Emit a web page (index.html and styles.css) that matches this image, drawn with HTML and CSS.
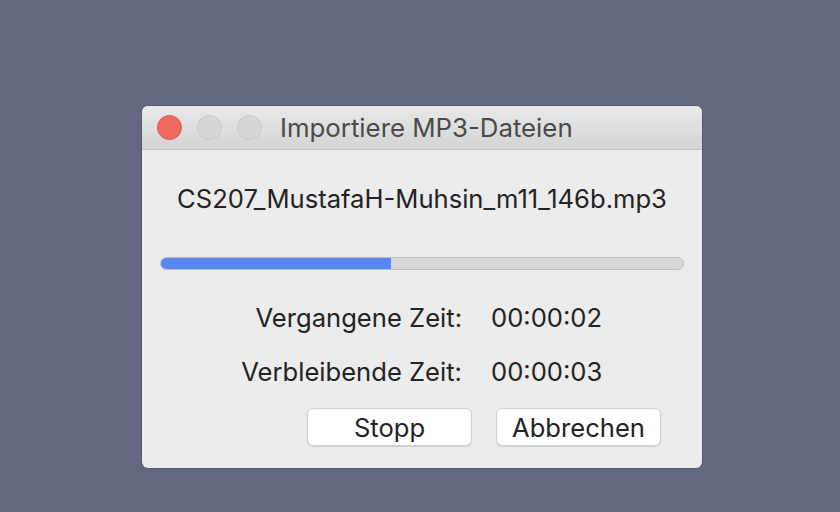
FILE: index.html
```html
<!DOCTYPE html>
<html>
<head>
<meta charset="utf-8">
<link rel="stylesheet" href="styles.css">
</head>
<body>
<div class="window">
  <div class="titlebar">
    <div class="lights">
      <span class="light close"></span>
      <span class="light"></span>
      <span class="light"></span>
    </div>
    <div class="title">Importiere MP3-Dateien</div>
  </div>
  <div class="content">
    <div class="filename">CS207_MustafaH-Muhsin_m11_146b.mp3</div>
    <div class="progress"><div class="fill" style="width:44%"></div></div>
    <div class="times">
      <div class="label">Vergangene Zeit:</div><div class="value">00:00:02</div>
      <div class="label">Verbleibende Zeit:</div><div class="value">00:00:03</div>
    </div>
    <div class="buttons">
      <button class="btn">Stopp</button>
      <button class="btn">Abbrechen</button>
    </div>
  </div>
</div>
</body>
</html>
```
FILE: styles.css
```css
html, body { margin: 0; padding: 0; }
body {
  background: #63677f;
  width: 840px;
  height: 512px;
  overflow: hidden;
  font-family: Inter, "Open Sans", sans-serif;
  color: #232323;
}
.window {
  margin: 106px 0 0 142px;
  width: 560px;
  height: 362px;
  border-radius: 6px;
  background: #ececec;
  overflow: hidden;
  box-shadow: 0 0 0 0.5px rgba(0,0,0,0.25);
  display: flex;
  flex-direction: column;
}
.titlebar {
  height: 43px;
  border-bottom: 1px solid #c5c5c5;
  background: linear-gradient(#e9e9e9, #d4d4d4);
  display: flex;
  align-items: center;
  padding-left: 15px;
}
.lights { display: flex; gap: 15px; }
.light {
  width: 23px; height: 23px;
  border-radius: 50%;
  border: 1px solid #c8c8c8;
  background: #d6d6d6;
}
.light.close { background: #ec6a5e; border-color: #d35c51; }
.title {
  margin-left: 18px;
  font-size: 25.8px;
  color: #4a4a4a;
  padding-bottom: 1px;
}
.content {
  flex: 1;
  display: flex;
  flex-direction: column;
  padding: 0 18px 0 18px;
}
.filename {
  text-align: center;
  font-size: 25.6px;
  margin-top: 34px;
  line-height: 30px;
}
.progress {
  margin-top: 43px;
  height: 11px;
  border: 1px solid #bebebe;
  border-radius: 7px;
  background: #d9d9d9;
  overflow: hidden;
}
.fill { height: 100%; background: #5788f4; }
.times {
  display: grid;
  grid-template-columns: 302px auto;
  column-gap: 29px;
  row-gap: 24px;
  margin-top: 33px;
  font-size: 25.6px;
  line-height: 30px;
}
.label { text-align: right; }
.buttons {
  display: flex;
  justify-content: flex-end;
  gap: 24px;
  padding-right: 23px;
  margin-top: 21px;
}
.btn {
  width: 165px;
  height: 38px;
  background: #fff;
  border: 1px solid #cfcfcf;
  border-radius: 6px;
  box-shadow: 0 1px 1px rgba(0,0,0,0.12);
  font-family: inherit;
  font-size: 25.6px;
  color: #232323;
  padding: 0;
}
```
